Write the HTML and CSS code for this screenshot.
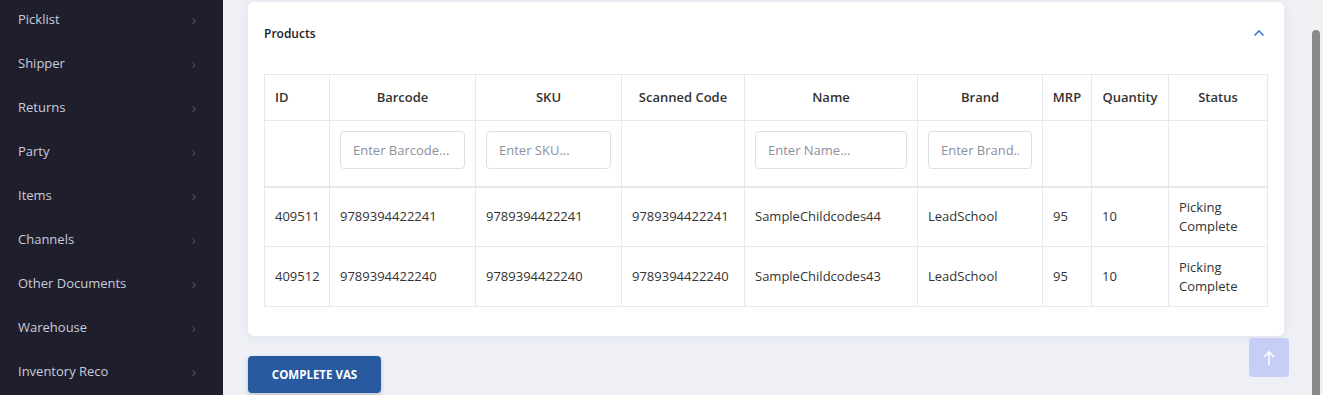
FILE: index.html
```html
<!DOCTYPE html>
<html lang="en">
<head>
    <meta charset="UTF-8">
    <meta name="viewport" content="width=device-width, initial-scale=1.0">
    <title>VAS Products</title>
    <link rel="stylesheet" href="styles.css">
</head>
<body>
    <div class="layout">
        <aside class="sidebar">
            <ul class="nav">
                <li><span>Picklist</span><i class="chev">&#8250;</i></li>
                <li><span>Shipper</span><i class="chev">&#8250;</i></li>
                <li><span>Returns</span><i class="chev">&#8250;</i></li>
                <li><span>Party</span><i class="chev">&#8250;</i></li>
                <li><span>Items</span><i class="chev">&#8250;</i></li>
                <li><span>Channels</span><i class="chev">&#8250;</i></li>
                <li><span>Other Documents</span><i class="chev">&#8250;</i></li>
                <li><span>Warehouse</span><i class="chev">&#8250;</i></li>
                <li><span>Inventory Reco</span><i class="chev">&#8250;</i></li>
            </ul>
        </aside>
        <main class="content">
            <section class="card">
                <div class="card-header">
                    <h3>Products</h3>
                    <svg class="collapse" width="12" height="8" viewBox="0 0 12 8">
                        <path d="M1.5 6.5 L6 2 L10.5 6.5" fill="none" stroke="#3b7ddd" stroke-width="1.6"/>
                    </svg>
                </div>
                <table class="products">
                    <colgroup>
                        <col style="width:65px"><col style="width:146px"><col style="width:146px">
                        <col style="width:123px"><col style="width:173px"><col style="width:125px">
                        <col style="width:49px"><col style="width:77px"><col style="width:99px">
                    </colgroup>
                    <thead>
                        <tr>
                            <th class="left">ID</th>
                            <th>Barcode</th>
                            <th>SKU</th>
                            <th>Scanned Code</th>
                            <th>Name</th>
                            <th>Brand</th>
                            <th>MRP</th>
                            <th>Quantity</th>
                            <th>Status</th>
                        </tr>
                        <tr class="filters">
                            <td></td>
                            <td><input type="text" placeholder="Enter Barcode..."></td>
                            <td><input type="text" placeholder="Enter SKU..."></td>
                            <td></td>
                            <td><input type="text" placeholder="Enter Name..."></td>
                            <td><input type="text" placeholder="Enter Brand..."></td>
                            <td></td>
                            <td></td>
                            <td></td>
                        </tr>
                    </thead>
                    <tbody>
                        <tr>
                            <td>409511</td>
                            <td>9789394422241</td>
                            <td>9789394422241</td>
                            <td>9789394422241</td>
                            <td>SampleChildcodes44</td>
                            <td>LeadSchool</td>
                            <td>95</td>
                            <td>10</td>
                            <td>Picking Complete</td>
                        </tr>
                        <tr>
                            <td>409512</td>
                            <td>9789394422240</td>
                            <td>9789394422240</td>
                            <td>9789394422240</td>
                            <td>SampleChildcodes43</td>
                            <td>LeadSchool</td>
                            <td>95</td>
                            <td>10</td>
                            <td>Picking Complete</td>
                        </tr>
                    </tbody>
                </table>
            </section>
            <button class="btn-complete">COMPLETE VAS</button>
            <button class="to-top" aria-label="Back to top">
                <svg width="14" height="16" viewBox="0 0 14 16">
                    <path d="M7 15 V2 M2 7 L7 2 L12 7" fill="none" stroke="#fff" stroke-width="1.6"/>
                </svg>
            </button>
        </main>
        <div class="scrollbar"><div class="thumb"></div></div>
    </div>
</body>
</html>
```

FILE: styles.css
```css
* {
    box-sizing: border-box;
}
body {
    margin: 0;
    font-family: "Open Sans", "Noto Sans", sans-serif;
    background-color: #eef0f6;
    color: #333;
    overflow: hidden;
}
.layout {
    display: flex;
    height: 395px;
}
.sidebar {
    width: 223px;
    flex-shrink: 0;
    background-color: #1f1e2d;
    overflow: hidden;
}
.nav {
    list-style: none;
    margin: -3px 0 0;
    padding: 0;
}
.nav li {
    display: flex;
    align-items: center;
    justify-content: space-between;
    height: 44px;
    padding: 0 27px 0 18px;
    color: #c9ccd9;
    font-size: 13px;
}
.nav .chev {
    font-style: normal;
    color: #4b4b68;
    font-size: 14px;
}
.content {
    flex: 1;
    position: relative;
    padding: 2px 24px 0 25px;
}
.card {
    background: white;
    border-radius: 6px;
    box-shadow: 0 2px 12px rgba(30, 30, 70, 0.06);
    padding: 16px 16px 29px 16px;
}
.card-header {
    display: flex;
    justify-content: space-between;
    align-items: center;
    height: 30px;
    margin-bottom: 26px;
}
.card-header h3 {
    margin: 0;
    font-size: 12px;
    font-weight: 600;
    color: #222;
}
.collapse {
    margin-right: 3px;
}
.products {
    width: 1003px;
    table-layout: fixed;
    border-collapse: collapse;
    font-size: 13px;
}
.products th, .products td {
    border: 1px solid #e8e8ef;
    padding: 10px 10px;
    line-height: 19px;
    text-align: left;
}
.products th {
    font-weight: 600;
    text-align: center;
    padding: 13px 4px;
    color: #333;
}
.products th.left {
    text-align: left;
    padding-left: 10px;
}
.products .filters td {
    padding: 10px 10px 0;
    height: 66px;
    vertical-align: top;
    border-bottom: 2px solid #e8e8ef;
}
.products tbody td {
    height: 60px;
    padding: 0 10px;
}
.products input {
    width: 100%;
    height: 38px;
    border: 1px solid #dde0e7;
    border-radius: 4px;
    padding: 0 12px;
    font-family: inherit;
    font-size: 13px;
    outline: none;
}
.products input::placeholder {
    color: #8c8f9e;
}
.btn-complete {
    margin-top: 20px;
    width: 133px;
    height: 37px;
    border: none;
    border-radius: 4px;
    background-color: #275a9f;
    color: white;
    font-family: "Open Sans", sans-serif;
    font-weight: 700;
    font-size: 11.5px;
    box-shadow: 0 2px 4px rgba(0, 0, 0, 0.2);
    cursor: pointer;
}
.to-top {
    position: absolute;
    right: 19px;
    top: 338px;
    width: 40px;
    height: 39px;
    border: none;
    border-radius: 4px;
    background-color: #c6cdf7;
    display: flex;
    align-items: center;
    justify-content: center;
}
.scrollbar {
    width: 15px;
    flex-shrink: 0;
    background-color: #f1f1f1;
    padding: 30px 3px 0 4px;
}
.thumb {
    height: 100%;
    background-color: #8a8a8a;
    border-radius: 4px 4px 0 0;
}
```
